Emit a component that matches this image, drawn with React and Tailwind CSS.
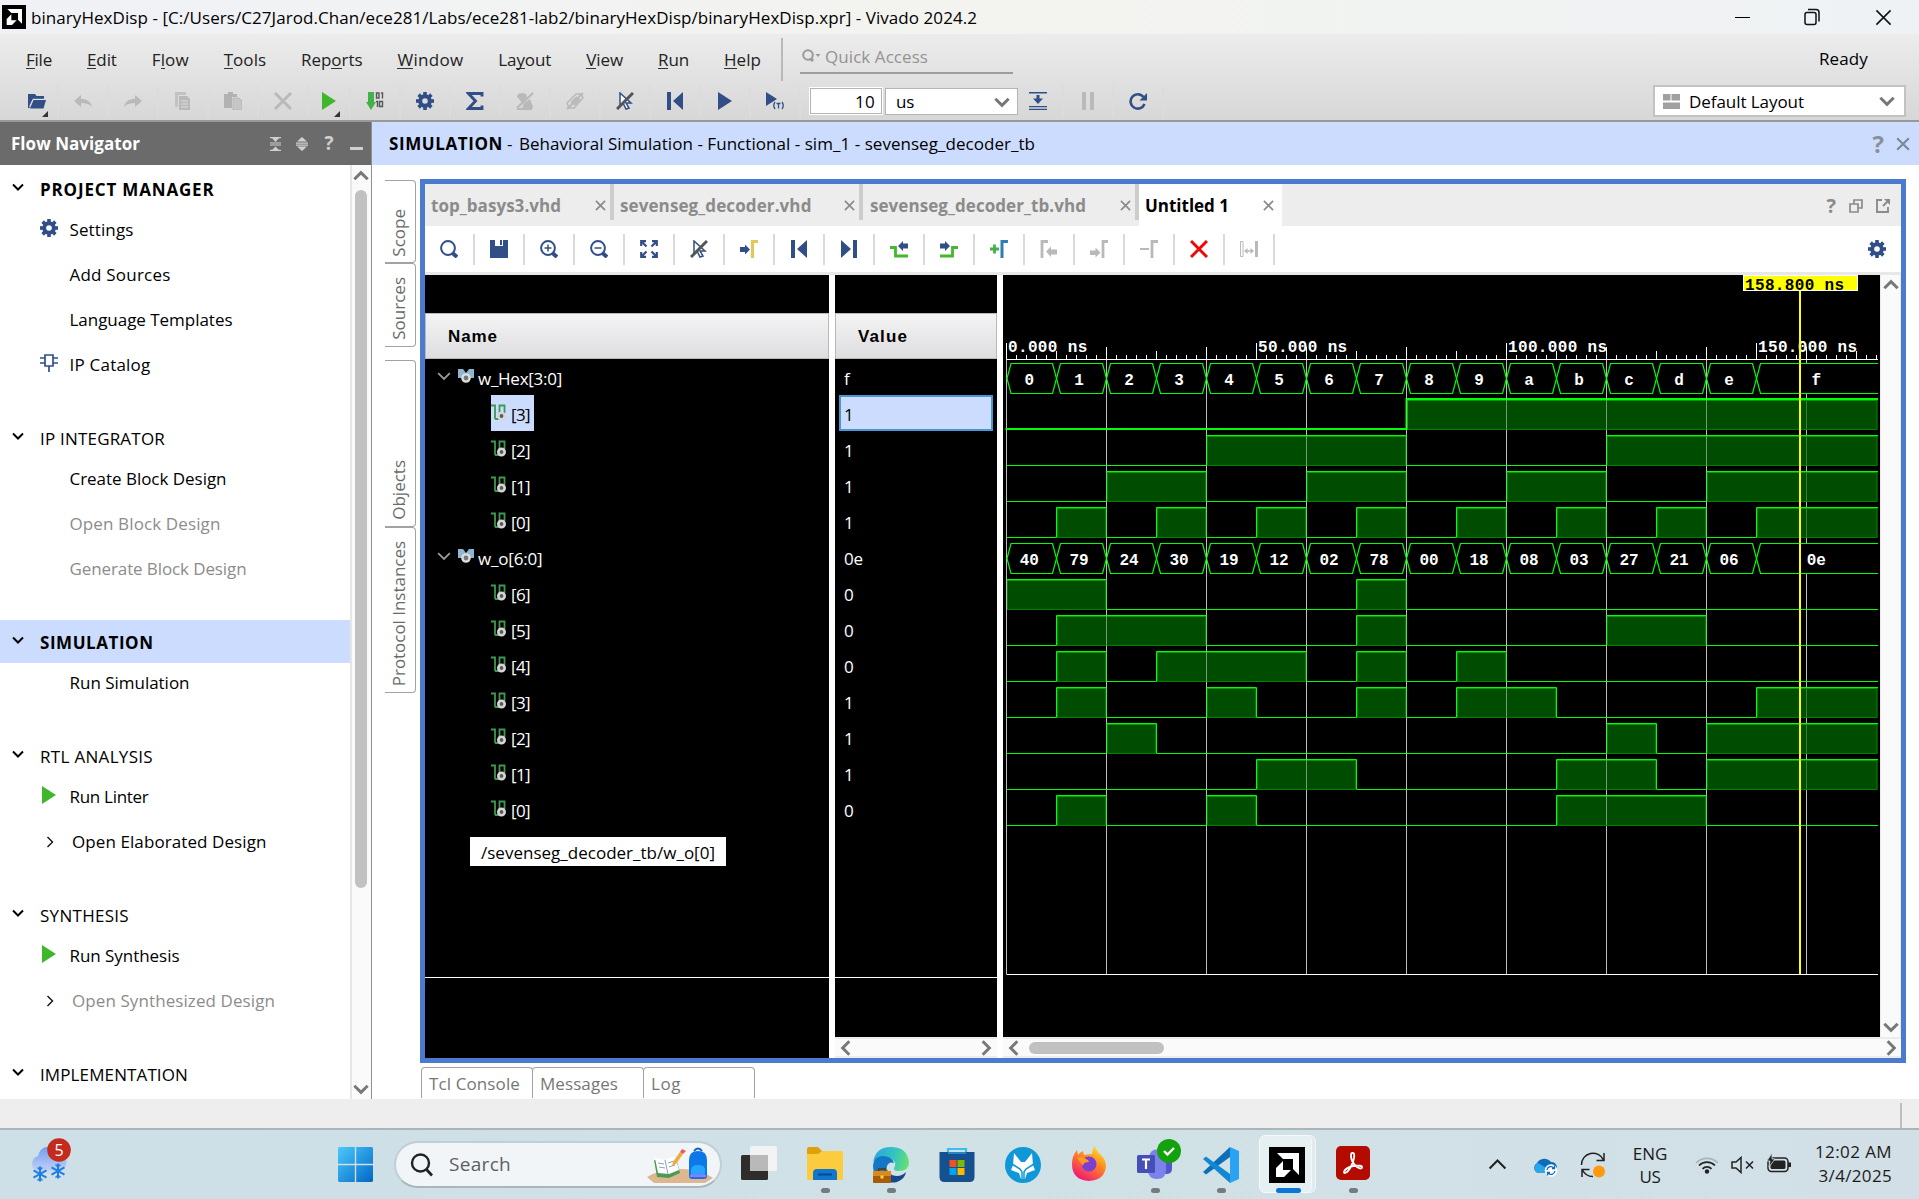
import React, { useLayoutEffect, useRef } from "react";

const NAVY = "#314f86";
const GRAY = "#b9b9b9";

/* Single-line label whose tracking is adjusted so that it fills a given width. */
function Label({ w, className = "", children }) {
  const ref = useRef(null);
  useLayoutEffect(() => {
    const el = ref.current;
    el.style.letterSpacing = "0px";
    const n = el.textContent.length;
    const natural = el.getBoundingClientRect().width;
    if (w && n) el.style.letterSpacing = `${(w - natural) / n}px`;
  }, [w]);
  return (
    <span ref={ref} className={"inline-block whitespace-pre " + className}>
      {children}
    </span>
  );
}

function Svg({ w = 18, h = 18, vb, className = "", children }) {
  return (
    <svg width={w} height={h} viewBox={vb || `0 0 ${w} ${h}`} className={"block shrink-0 " + className} fill="none">
      {children}
    </svg>
  );
}

/* ---------- small icons ---------- */
const Gear = ({ s = 18, c = NAVY }) => (
  <Svg w={s} h={s} vb="0 0 18 18">
    <circle cx="9" cy="9" r="4.8" stroke={c} strokeWidth="4" />
    {[0, 45, 90, 135, 180, 225, 270, 315].map((a) => (
      <rect key={a} x="7.2" y="0" width="3.6" height="4" fill={c} transform={`rotate(${a} 9 9)`} />
    ))}
  </Svg>
);
const OpenFolder = () => (
  <Svg>
    <path d="M0 16V2h7l1.500 2H16v3H5L1.500 16z" fill={NAVY} />
    <path d="M5.500 8H18l-2.500 8.500H2z" fill={NAVY} />
    <path d="M1.500 14.500l3.500-7.200h11" stroke="#dfe3ea" strokeWidth="1" />
  </Svg>
);
const Undo = () => (
  <Svg>
    <path d="M0 9l7-6v4c6 0 10 2.500 11 8-2.500-3-6-4-11-4v4z" fill={GRAY} />
  </Svg>
);
const Redo = () => (
  <Svg>
    <path d="M18 9l-7-6v4c-6 0-10 2.500-11 8 2.500-3 6-4 11-4v4z" fill={GRAY} />
  </Svg>
);
const Copy = () => (
  <Svg>
    <path d="M1 0h11v3H4v12H1z" fill="#c2c2c2" />
    <path d="M5 4h8l3 3v11H5z" fill={GRAY} />
    <path d="M7 9h7M7 12h7M7 15h7" stroke="#dedede" />
  </Svg>
);
const Paste = () => (
  <Svg>
    <path d="M0 2h4V0h5v2h4v3H8v11H0z" fill="#b2b2b2" />
    <path d="M9 6h6l3 3v9H9z" fill="#c6c6c6" stroke={GRAY} />
  </Svg>
);
const Cross = ({ c = GRAY, sw = 3 }) => (
  <Svg>
    <path d="M1 1l16 16M17 1L1 17" stroke={c} strokeWidth={sw} />
  </Svg>
);
const PlayGreen = () => (
  <Svg>
    <path d="M2 0l14 9L2 18z" fill="#3fb62c" />
  </Svg>
);
const Bits = () => (
  <Svg>
    <path d="M2 0h6v10h2l-5 8-5-8h2z" fill="#43b049" />
    <path d="M10.500 1h2.500v5h-2.500zM15 1h1.500v5.500M13.500 9.500h3v5h-3zM10 9.500h1.500V15" stroke="#555" strokeWidth="1.400" />
  </Svg>
);
const Sigma = () => (
  <Svg>
    <path d="M16 4.500V1.500H2.500L9.500 9l-7 7.500H16v-3" stroke={NAVY} strokeWidth="2.900" />
  </Svg>
);
const MutedPen = () => (
  <Svg>
    <path d="M2 2l4-1 4 1 1 3-5 6-3-4-2-2zM8 11l6-4 3 8-1 2H6z" fill={GRAY} />
    <path d="M1 16L17 1M1 17h15" stroke={GRAY} strokeWidth="2.200" />
  </Svg>
);
const MutedTag = () => (
  <Svg>
    <path d="M1 11L10 2h5l2 4-9 10H3z" stroke={GRAY} strokeWidth="1.500" />
    <path d="M5 11l6-6M8 13l6-6M1 17L17 1" stroke={GRAY} strokeWidth="2" />
  </Svg>
);
const CursorOff = () => (
  <Svg>
    <path d="M4 1v13l3-3 3 6 3-1-3-5h5z" fill="#fff" stroke={NAVY} strokeWidth="1.500" />
    <path d="M1 17L17 1" stroke="#555" strokeWidth="3" />
  </Svg>
);
const ToStart = () => (
  <Svg>
    <path d="M1 0h4v18H1zM17 0v18L7 9z" fill={NAVY} />
  </Svg>
);
const ToEnd = () => (
  <Svg>
    <path d="M13 0h4v18h-4zM1 0v18l10-9z" fill={NAVY} />
  </Svg>
);
const Play = () => (
  <Svg>
    <path d="M2 0l14 9L2 18z" fill={NAVY} />
  </Svg>
);
const PlayT = () => (
  <Svg>
    <path d="M0 0l11 7L0 14z" fill={NAVY} />
    <path d="M9 10q-2.500 3.500 0 7M16 10q2.500 3.500 0 7M10.500 11.500h4M12.500 11.500v5" stroke={NAVY} strokeWidth="1.300" />
  </Svg>
);
const StepDown = () => (
  <Svg>
    <path d="M0 0h18v1.500H0zM0 14h18v1.300H0zM0 16.700h18V18H0zM7.500 3h3v3.500H14L9 12 4 6.500h3.500z" fill={NAVY} />
  </Svg>
);
const Pause = () => (
  <Svg>
    <path d="M3 0h4v18H3zM11 0h4v18h-4z" fill={GRAY} />
  </Svg>
);
const Relaunch = () => (
  <Svg>
    <path d="M14.500 5A7.200 7.200 0 1 0 15.500 12" stroke={NAVY} strokeWidth="2.600" />
    <path d="M18 1v7.500h-7.500z" fill={NAVY} />
  </Svg>
);
const Lens = ({ sign }) => (
  <Svg>
    <circle cx="8" cy="8" r="6.900" stroke={NAVY} strokeWidth="2" />
    <path d="M12.500 13l4.500 4" stroke={NAVY} strokeWidth="4" />
    {sign && <path d="M4.500 8h7" stroke={NAVY} strokeWidth="1.500" />}
    {sign === "+" && <path d="M8 4.500v7" stroke={NAVY} strokeWidth="1.500" />}
  </Svg>
);
const Save = () => (
  <Svg>
    <path d="M0 0h5v6h8V0h5v18H0z" fill={NAVY} />
    <path d="M10 0h2v5h-2z" fill={NAVY} />
  </Svg>
);
const FitIcon = () => (
  <Svg>
    <path d="M1.200 6V1.200H6M12 1.200h4.800V6M16.800 12v4.800H12M6 16.800H1.200V12M1.500 1.500l5 5M16.500 1.500l-5 5M16.500 16.500l-5-5M1.500 16.500l5-5" stroke={NAVY} strokeWidth="2.200" />
  </Svg>
);
const GotoCursor = () => (
  <Svg>
    <path d="M0 7h5V4.500l5 5-5 5V12H0z" fill={NAVY} />
    <path d="M12.500 18V1.500H18" stroke="#e3c65c" strokeWidth="3.200" />
  </Svg>
);
const PrevEdge = () => (
  <Svg>
    <path d="M8 6l5-5v2.500h5v5h-5V11z" fill={NAVY} />
    <path d="M0 7.500h5.500v8.500H18" stroke="#43b82f" strokeWidth="2.800" />
  </Svg>
);
const NextEdge = () => (
  <Svg>
    <path d="M10 6L5 1v2.500H0v5h5V11z" fill={NAVY} />
    <path d="M18 7.500h-5.500v8.500H0" stroke="#43b82f" strokeWidth="2.800" />
  </Svg>
);
const AddMarker = () => (
  <Svg>
    <path d="M0 9h9M4.500 4.500v9" stroke="#43b049" strokeWidth="2.800" />
    <path d="M12 18V1.500h6" stroke="#2f7fb5" strokeWidth="3" />
  </Svg>
);
const PrevMarker = () => (
  <Svg>
    <path d="M2 18V1.500h6" stroke={GRAY} strokeWidth="2.800" />
    <path d="M6 11.500l5-5v3h6v5h-6v2.500z" fill={GRAY} />
  </Svg>
);
const NextMarker = () => (
  <Svg>
    <path d="M13 18V1.500h5" stroke={GRAY} strokeWidth="2.800" />
    <path d="M10.500 12.500l-5-5v3H0v4.500h5.500v2.500z" fill={GRAY} />
  </Svg>
);
const DelMarker = () => (
  <Svg>
    <path d="M0 9h9" stroke={GRAY} strokeWidth="2" />
    <path d="M12 18V1.500h6" stroke={GRAY} strokeWidth="2.800" />
  </Svg>
);
const Swap = () => (
  <Svg>
    <path d="M.5 1.500h2.500v15H.5z" stroke={GRAY} />
    <path d="M15 1h3v16h-3zM4 11l3.500-3v6zM14 11l-3.500-3v6z" fill={GRAY} />
    <path d="M5 11h8" stroke={GRAY} strokeWidth="1.500" />
  </Svg>
);
const Chev = ({ d = "down", s = 12, c = "#222", sw = 2 }) => (
  <Svg w={s} h={s} vb="0 0 12 12">
    <path
      d={{ down: "M1 3.500l5 5 5-5", up: "M1 8.500l5-5 5 5", left: "M8.500 1l-5 5 5 5", right: "M3.500 1l5 5-5 5" }[d]}
      stroke={c}
      strokeWidth={sw}
    />
  </Svg>
);
const SmallX = ({ s = 11, c = "#8a8a8a", sw = 1.800 }) => (
  <Svg w={s} h={s} vb="0 0 12 12">
    <path d="M1 1l10 10M11 1L1 11" stroke={c} strokeWidth={sw} />
  </Svg>
);
const Chip = () => (
  <Svg>
    <path d="M5 1h8v11H5zM9 12v6M0 4h5M0 9h5M13 4h5M13 9h5" stroke={NAVY} strokeWidth="1.700" />
  </Svg>
);
const BusIcon = () => (
  <Svg w={16} h={15}>
    <path d="M0 0h5l3 4 3-4h5v9h-4l-3 3H7L4 9H0z" fill="#8fb6cf" />
    <circle cx="8" cy="9" r="3.600" fill="#777" stroke="#dedede" strokeWidth="2.400" />
  </Svg>
);
const BitIcon = () => (
  <Svg w={16} h={17}>
    <path d="M0 1.500h4V15M4 15h4.500M8.500 12V1.500h5V9" stroke="#3c9a52" strokeWidth="1.800" />
    <circle cx="10.500" cy="12" r="3.200" fill="#5c5c5c" stroke="#d6d6d6" strokeWidth="2.600" />
  </Svg>
);
const AmdMark = ({ s }) => (
  <Svg w={s} h={s} vb="0 0 36 36">
    <rect width="36" height="36" fill="#000" />
    <path d="M8 6h22v22l-6-6V12H14z" fill="#fff" />
    <path d="M14 14v9h8l-7 7H7v-9z" fill="#fff" />
  </Svg>
);

/* ---------- header ---------- */
const U = ({ children }) => (
  <span className="inline-block border-b border-[#333] leading-[17px]">{children}</span>
);

function TitleBar() {
  return (
    <div className="flex h-[34px] shrink-0 items-center bg-gradient-to-r from-[#f0f1f6] via-[#f3f4ef] to-[#eff2f5] pl-[2px] text-[17px] text-black">
      <AmdMark s={24} />
      <Label w={946} className="ml-[5px] pt-[2px]">
        binaryHexDisp - [C:/Users/C27Jarod.Chan/ece281/Labs/ece281-lab2/binaryHexDisp/binaryHexDisp.xpr] - Vivado 2024.2
      </Label>
      <div className="ml-auto flex items-center pr-[27px]">
        <div className="h-px w-[15px] bg-black" />
        <Svg w={16} h={18} className="ml-[54px]">
          <rect x="1" y="4.500" width="11" height="12" rx="2" stroke="#111" strokeWidth="1.500" />
          <path d="M4 1.500h8q3 0 3 3v9" stroke="#111" strokeWidth="1.500" />
        </Svg>
        <div className="ml-[55px]">
          <SmallX s={17} c="#111" sw={1.1} />
        </div>
      </div>
    </div>
  );
}

function MenuRow() {
  return (
    <div className="flex h-[50px] items-center pl-[26px] text-[17px] text-[#222]">
      <div className="flex w-[733px] items-center gap-[34.9px] pt-[2px]">
        <Label w={26}><U>F</U>ile</Label>
        <Label w={30}><U>E</U>dit</Label>
        <Label w={37}>F<U>l</U>ow</Label>
        <Label w={42.500}><U>T</U>ools</Label>
        <Label w={61.500}>Rep<U>o</U>rts</Label>
        <Label w={66}><U>W</U>indow</Label>
        <Label w={53}>La<U>y</U>out</Label>
        <Label w={37}><U>V</U>iew</Label>
        <Label w={31}><U>R</U>un</Label>
        <Label w={37}><U>H</U>elp</Label>
      </div>
      <div className="ml-[22px] h-[43px] w-[2px] bg-[#b9b9b9]" />
      <div className="-mt-[4px] ml-[17px] flex h-[34px] w-[213px] items-center border-b-2 border-[#9d9d9d] text-[#939393]">
        <Svg w={19} h={15} className="ml-[2px]">
          <circle cx="6" cy="6" r="4.800" stroke="#999" strokeWidth="2" />
          <path d="M9 10l2 2" stroke="#999" strokeWidth="3" />
          <path d="M13.500 5h5L16 8z" fill="#999" />
        </Svg>
        <Label w={103} className="ml-[4px] pt-px">Quick Access</Label>
      </div>
      <div className="ml-auto pr-[51px] text-black">
        <Label w={49}>Ready</Label>
      </div>
    </div>
  );
}

const Corner = () => (
  <Svg w={6} h={6} className="absolute right-[9px] bottom-0">
    <path d="M6 0v6H0z" fill="#333" />
  </Svg>
);

function Cell({ w = "w-[50px]", corner, children }) {
  return (
    <div className={"relative flex h-[32px] shrink-0 items-center justify-center border-r-2 border-[#dcdcdc] " + w}>
      {children}
      {corner && <Corner />}
    </div>
  );
}

function MainToolbar() {
  return (
    <div className="flex h-[36px] items-center pb-[2px] pl-[17px] text-[17px] text-black">
      <Cell w="w-[42px]" corner><OpenFolder /></Cell>
      <Cell><Undo /></Cell>
      <Cell><Redo /></Cell>
      <Cell><Copy /></Cell>
      <Cell><Paste /></Cell>
      <Cell><Cross /></Cell>
      <Cell w="w-[42px]" corner><PlayGreen /></Cell>
      <Cell><Bits /></Cell>
      <Cell><Gear /></Cell>
      <Cell><Sigma /></Cell>
      <Cell><MutedPen /></Cell>
      <Cell><MutedTag /></Cell>
      <Cell><CursorOff /></Cell>
      <Cell><ToStart /></Cell>
      <Cell><Play /></Cell>
      <Cell><PlayT /></Cell>
      <div className="ml-[8px] flex h-[28px] w-[74px] items-center justify-end border-2 border-white bg-white pt-px pr-[6px] outline outline-[#b4b4b4] -outline-offset-2">
        <Label w={20}>10</Label>
      </div>
      <div className="ml-[2px] flex h-[27px] w-[133px] items-center justify-between border border-[#b4b4b4] bg-white pt-px pr-[7px] pl-[10px]">
        <Label w={18}>us</Label>
        <Chev s={16} c="#777" sw={2.200} />
      </div>
      <div className="-ml-[4px] flex">
        <Cell><StepDown /></Cell>
        <Cell><Pause /></Cell>
        <Cell><Relaunch /></Cell>
      </div>
      <div className="mr-[13px] ml-auto flex h-[32px] w-[253px] items-center border-2 border-[#c2c2c2] bg-white pr-[9px] pl-[8px]">
        <Svg w={17} h={15}>
          <path d="M0 0h7.500v6.500H0zM8.500 0H17v6.500H8.500zM0 8.500h17V15H0z" fill="#a0a0a0" />
        </Svg>
        <Label w={115} className="ml-[9px] pt-[2px]">Default Layout</Label>
        <div className="ml-auto"><Chev s={16} c="#777" sw={2.200} /></div>
      </div>
    </div>
  );
}

/* ---------- flow navigator ---------- */
const SECTIONS = [
  { t: "PROJECT MANAGER", w: 174.500, bold: true, items: [
    { t: "Settings", w: 64, icon: "gear" },
    { t: "Add Sources", w: 101 },
    { t: "Language Templates", w: 163 },
    { t: "IP Catalog", w: 81, icon: "chip" },
  ] },
  { t: "IP INTEGRATOR", w: 125, items: [
    { t: "Create Block Design", w: 157 },
    { t: "Open Block Design", w: 151, off: true },
    { t: "Generate Block Design", w: 177, off: true },
  ] },
  { t: "SIMULATION", w: 113.500, bold: true, active: true, items: [{ t: "Run Simulation", w: 120 }] },
  { t: "RTL ANALYSIS", w: 113, items: [
    { t: "Run Linter", w: 79, icon: "play" },
    { t: "Open Elaborated Design", w: 194.500, sub: true },
  ] },
  { t: "SYNTHESIS", w: 89, items: [
    { t: "Run Synthesis", w: 110, icon: "play" },
    { t: "Open Synthesized Design", w: 203, sub: true, off: true },
  ] },
  { t: "IMPLEMENTATION", w: 148, items: [] },
];

function FlowNavigator() {
  return (
    <div className="flex w-[372px] shrink-0 flex-col border-r border-[#8f8f8f]">
      <div className="flex h-[43px] shrink-0 items-center bg-[#6b6b6b] pr-[8px] pl-[11px] text-[17px] font-bold text-white">
        <Label w={129}>Flow Navigator</Label>
        <div className="ml-auto flex items-center gap-[15px]">
          <Svg w={11} h={14}>
            <path d="M0 0h11v1.200H0zM2 1h7L5.500 5zM0 5.500h11v1H0zM0 7.500h11v1H0zM5.500 9.500L9 13H2zM0 12.800h11V14H0z" fill="#d0d0d0" />
          </Svg>
          <Svg w={12} h={14}>
            <path d="M6 0l5 4.500H1zM0 5.500h12v1.200H0zM0 7.500h12v1.200H0zM1 9.500h10L6 14z" fill="#d0d0d0" />
          </Svg>
          <span className="w-[12px] text-center text-[19px] text-[#d0d0d0]">?</span>
          <div className="mt-[10px] h-[3px] w-[13px] bg-[#d0d0d0]" />
        </div>
      </div>
      <div className="flex h-[934px] shrink-0 overflow-hidden bg-white">
        <div className="flex w-[350px] flex-col gap-[33px] overflow-hidden pt-[6px] text-[17px] text-black">
          {SECTIONS.map((s) => (
            <div key={s.t} className="flex flex-col">
              <div className={"-mt-[4px] -mb-[3px] flex h-[43px] items-center pl-[12px] " + (s.active ? "bg-[#cbdcfe]" : "")}>
                <div className="-mt-[3px]"><Chev c="#000" /></div>
                <Label w={s.w} className={"ml-[16px] pt-[3px] " + (s.bold ? "font-bold" : "")}>{s.t}</Label>
              </div>
              {s.items.map((i) => (
                <div key={i.t} className={"flex h-[45px] items-center pl-[40px] " + (i.off ? "text-[#8c8c8c]" : "")}>
                  <div className={"flex shrink-0 " + (i.sub ? "w-[32px] pl-[4px]" : "w-[29.500px] -mt-[4px]")}>
                    {i.icon === "gear" && <Gear />}
                    {i.icon === "chip" && <Chip />}
                    {i.icon === "play" && <PlayGreen />}
                    {i.sub && <Chev d="right" c="#111" sw={1.400} />}
                  </div>
                  <Label w={i.w}>{i.t}</Label>
                </div>
              ))}
            </div>
          ))}
        </div>
        <div className="flex w-[21px] flex-col items-center border-l-2 border-[#e6e6e6] bg-[#fafafa] pt-[3px] pr-[2px] pb-[2px]">
          <Chev d="up" s={16} c="#777" sw={2.200} />
          <div className="mt-[6px] h-[698px] w-[12px] rounded-full bg-[#c1c1c1]" />
          <div className="mt-auto"><Chev s={16} c="#777" sw={2.200} /></div>
        </div>
      </div>
    </div>
  );
}

/* ---------- wave viewer ---------- */
const HEX = ["0", "1", "2", "3", "4", "5", "6", "7", "8", "9", "a", "b", "c", "d", "e", "f"];
const SEG = ["40", "79", "24", "30", "19", "12", "02", "78", "00", "18", "08", "03", "27", "21", "06", "0e"];
const bits = (values, n) =>
  Array.from({ length: n }, (_, k) => values.map((v) => (parseInt(v, 16) >> (n - 1 - k)) & 1));
const ROWS = [
  { name: "w_Hex[3:0]", w: 84, value: "f", bus: HEX },
  ...bits(HEX, 4).map((b, k) => ({ name: `[${3 - k}]`, bit: b, value: "1", selected: k === 0 })),
  { name: "w_o[6:0]", w: 64.500, value: "0e", bus: SEG },
  ...bits(SEG, 7).map((b, k) => ({ name: `[${6 - k}]`, bit: b, value: String(b[15]) })),
];

const X0 = 3.500;
const XEND = 875;
const xAt = (i) => (i >= 16 ? XEND : X0 + i * 50);

function BusTrace({ values, y }) {
  return values.map((v, i) => {
    const a = xAt(i) + (i ? 0 : 0.500);
    const b = xAt(i + 1);
    const last = i === 15;
    return (
      <g key={i}>
        <path
          d={last
            ? `M${b} ${y} H${a + 4} L${a} ${y + 15} L${a + 4} ${y + 30} H${b}`
            : `M${a} ${y + 15} L${a + 4} ${y} H${b - 4} L${b} ${y + 15} L${b - 4} ${y + 30} H${a + 4} Z`}
          fill="#000"
          stroke="#00ff00"
          strokeWidth="1.200"
        />
        <text x={(a + b) / 2 - (last ? 1 : 2.500)} y={y + 21} textAnchor="middle" fill="#fff" className="font-['Liberation_Mono',monospace] text-[16px] font-bold">
          {v}
        </text>
      </g>
    );
  });
}

function BitTrace({ bit, y, selected }) {
  const sw = selected ? 2 : 1;
  const top = selected ? y - 0.500 : y;
  const low = selected ? y + 29.500 : y + 30;
  let d = `M${X0 - (selected ? 1 : 0)} ${bit[0] ? top : low}`;
  const fills = [];
  let start = bit[0] ? 0 : -1;
  for (let i = 1; i <= 16; i++) {
    if (i === 16 || bit[i] !== bit[i - 1]) {
      if (start >= 0) {
        fills.push([xAt(start), xAt(i)]);
        start = -1;
      }
      if (i < 16) {
        d += ` H${xAt(i)} V${bit[i] ? top : low}`;
        if (bit[i]) start = i;
      }
    }
  }
  d += ` H${XEND}`;
  return (
    <g>
      {fills.map(([a, b]) => (
        <g key={a}>
          <rect x={a + 0.500} y={y + 0.500} width={b - a - 1} height={30} fill="#006a00" fillOpacity="0.720" />
          <path d={`M${a + 1} ${y + 1} V${y + 30} H${b - 1} V${y + 1}`} stroke="#008000" />
          <path d={`M${a + 0.500} ${y + 1} H${b - 0.500}`} stroke="#009c00" />
        </g>
      ))}
      <path d={d} stroke="#00ff00" strokeWidth={sw} fill="none" />
    </g>
  );
}

function WaveCanvas() {
  const ticks = Array.from({ length: 88 }, (_, i) => i * 2);
  const grid = Array.from({ length: 9 }, (_, i) => i * 20);
  return (
    <svg width="877" height="762" className="block bg-black" fill="none">
      {grid.map((t) => (
        <path key={t} d={`M${X0 + t * 5} 84 V699`} stroke="#bdbdbd" />
      ))}
      {ticks.map((t) => (
        <path key={t} d={`M${X0 + t * 5} ${t % 20 === 0 ? 72 : t % 10 === 0 ? 76 : 80} V84`} stroke="#fff" />
      ))}
      {[0, 50, 100, 150].map((t) => (
        <g key={t}>
          <path d={`M${X0 + t * 5} 68 V84`} stroke="#fff" />
          <text x={X0 + t * 5 + 1.500} y="77" fill="#fff" className="font-['Liberation_Mono',monospace] text-[16px] font-bold tracking-[0.35px] whitespace-pre">
            {t}.000 ns
          </text>
        </g>
      ))}
      <path d={`M${X0} 84.500 H${XEND}`} stroke="#fff" />
      {ROWS.map((r, i) =>
        r.bus ? (
          <BusTrace key={i} values={r.bus} y={88.500 + 36 * i} />
        ) : (
          <BitTrace key={i} bit={r.bit} y={88.500 + 36 * i} selected={r.selected} />
        )
      )}
      {grid.slice(1, 8).map((t) => (
        <path key={t} d={`M${X0 + t * 5} 84 V550`} stroke="#bdbdbd" strokeOpacity="0.450" />
      ))}
      <path d={`M${X0} 699.500 H${XEND}`} stroke="#fff" />
      <rect x="796" y="15" width="2" height="684" fill="#ffff00" />
      <rect x="740.500" y="0.500" width="114" height="15" fill="#ffff00" stroke="#fff" />
      <text x="742" y="14.500" fill="#000" className="font-['Liberation_Mono',monospace] text-[16px] font-bold tracking-[0.35px] whitespace-pre">
        158.800 ns
      </text>
    </svg>
  );
}

function ColumnHeader({ children, w }) {
  return (
    <div className="mt-[38px] flex h-[46px] shrink-0 items-center border border-[#b8b8b8] bg-gradient-to-b from-[#f4f4f5] to-[#dedee0] pt-[2px] pl-[22px] font-['Liberation_Sans',Arial,sans-serif] text-[17px] font-bold text-black">
      <Label w={w}>{children}</Label>
    </div>
  );
}

function NameColumn() {
  return (
    <div className="relative flex w-[404px] shrink-0 flex-col bg-black text-[17px] text-white">
      <ColumnHeader w={50}>Name</ColumnHeader>
      {ROWS.map((r, i) =>
        r.bus ? (
          <div key={i} className="flex h-[36px] shrink-0 items-center pt-[4px] pl-[12px]">
            <div className="-mt-[6px]"><Chev s={14} c="#999" sw={1.600} /></div>
            <div className="-mt-[6px] ml-[7px]"><BusIcon /></div>
            <Label w={r.w} className="ml-[4px]">{r.name}</Label>
          </div>
        ) : (
          <div key={i} className="flex h-[36px] shrink-0 pl-[66px]">
            <div className={"flex w-[43px] items-center pt-[3px] " + (r.selected ? "bg-[#cbdcfe] text-black" : "")}>
              <div className="-mt-[5px]"><BitIcon /></div>
              <Label w={19} className="ml-[4px]">{r.name}</Label>
            </div>
          </div>
        )
      )}
      <div className="mt-[150px] h-px shrink-0 bg-white" />
      <div className="absolute top-[562px] left-[45px] flex h-[29px] w-[256px] items-center bg-white pt-[3px] pl-[11px] text-black">
        <Label w={234}>/sevenseg_decoder_tb/w_o[0]</Label>
      </div>
    </div>
  );
}

function ValueColumn() {
  return (
    <div className="flex w-[162px] shrink-0 flex-col bg-black text-[17px] text-white">
      <ColumnHeader w={50}>Value</ColumnHeader>
      {ROWS.map((r, i) => (
        <div
          key={i}
          className={
            "mx-[4px] flex h-[36px] shrink-0 items-center pt-[3px] " +
            (r.selected ? "border-2 border-[#4a96d3] bg-[#cbdcfe] pl-[3px] text-black" : "pl-[5px]")
          }
        >
          <Label w={r.value.length > 1 ? 19 : undefined}>{r.value}</Label>
        </div>
      ))}
      <div className="mt-[150px] h-px shrink-0 bg-white" />
      <div className="mt-auto flex h-[21px] items-center justify-between border-y-2 border-[#ececec] bg-[#fafafa] px-[3px]">
        <Chev d="left" s={16} c="#777" sw={2.200} />
        <Chev d="right" s={16} c="#777" sw={2.200} />
      </div>
    </div>
  );
}

function WaveColumn() {
  return (
    <div className="flex w-[898px] shrink-0 flex-col">
      <div className="flex h-[762px]">
        <WaveCanvas />
        <div className="flex w-[21px] flex-col items-center justify-between border-x border-[#ececec] bg-[#fafafa] py-[2px]">
          <Chev d="up" s={16} c="#777" sw={2.200} />
          <Chev s={16} c="#777" sw={2.200} />
        </div>
      </div>
      <div className="flex h-[21px] items-center border-y-2 border-[#ececec] bg-[#fafafa] pr-[2px] pl-[3px]">
        <Chev d="left" s={16} c="#777" sw={2.200} />
        <div className="ml-[7px] h-[12px] w-[135px] rounded-full bg-[#c1c1c1]" />
        <div className="ml-auto"><Chev d="right" s={16} c="#777" sw={2.200} /></div>
      </div>
    </div>
  );
}

function Tab({ children, w, box, last, pad = "pl-[6px]" }) {
  return (
    <div className={"flex shrink-0 " + box + (last ? " bg-white text-black" : " text-[#8b8b8b]")}>
      <div className={"flex flex-1 items-center justify-between " + pad + (last ? " pr-[8px]" : " pr-[4px]")}>
        <Label w={w} className="pt-[1px] font-bold">{children}</Label>
        <SmallX />
      </div>
      {!last && <div className="h-[36px] w-[4px] bg-[#cccccc]" />}
    </div>
  );
}

function ToolCell({ children }) {
  return (
    <div className="flex h-[31px] w-[50px] shrink-0 items-center justify-center border-r-2 border-[#dadada]">
      {children}
    </div>
  );
}

function WaveWindow() {
  return (
    <div className="flex h-[884px] w-[1486px] shrink-0 flex-col border-[5px] border-[#4a7bce] bg-white">
      <div className="flex h-[42px] shrink-0 bg-[#ededed] text-[17px]">
        <Tab box="w-[189px]" w={130}>top_basys3.vhd</Tab>
        <Tab box="w-[249px]" w={191.500}>sevenseg_decoder.vhd</Tab>
        <Tab box="w-[276px]" w={216} pad="pl-[7px]">sevenseg_decoder_tb.vhd</Tab>
        <Tab box="w-[143px]" w={84} last>Untitled 1</Tab>
        <div className="ml-auto flex items-center gap-[13px] pt-[2px] pr-[11px] text-[#8b8b8b]">
          <span className="text-[20px] leading-none font-bold">?</span>
          <Svg w={14} h={14}>
            <path d="M1 5h8v8H1zM5 5V1h8v8H9" stroke="#8b8b8b" strokeWidth="1.700" />
          </Svg>
          <Svg w={14} h={14}>
            <path d="M6 1H1v12h11V8M7 7l5-5" stroke="#8b8b8b" strokeWidth="1.900" />
            <path d="M8 0h6v6z" fill="#8b8b8b" />
          </Svg>
        </div>
      </div>
      <div className="flex h-[49px] shrink-0 items-center border-b-[3px] border-[#e8e8e8]">
        <ToolCell><Lens /></ToolCell>
        <ToolCell><Save /></ToolCell>
        <ToolCell><Lens sign="+" /></ToolCell>
        <ToolCell><Lens sign="-" /></ToolCell>
        <ToolCell><FitIcon /></ToolCell>
        <ToolCell><CursorOff /></ToolCell>
        <ToolCell><GotoCursor /></ToolCell>
        <ToolCell><ToStart /></ToolCell>
        <ToolCell><ToEnd /></ToolCell>
        <ToolCell><PrevEdge /></ToolCell>
        <ToolCell><NextEdge /></ToolCell>
        <ToolCell><AddMarker /></ToolCell>
        <ToolCell><PrevMarker /></ToolCell>
        <ToolCell><NextMarker /></ToolCell>
        <ToolCell><DelMarker /></ToolCell>
        <ToolCell><Cross c="#ee0808" sw={3} /></ToolCell>
        <ToolCell><Swap /></ToolCell>
        <div className="mr-[15px] ml-auto"><Gear /></div>
      </div>
      <div className="flex flex-1 gap-[6px]">
        <NameColumn />
        <ValueColumn />
        <WaveColumn />
      </div>
    </div>
  );
}

function SideTab({ box, children }) {
  return (
    <div className={"flex w-[31px] justify-center rounded-r-[4px] border border-l-0 border-[#a2a2a2] pr-[2px] text-[17px] text-[#6a6a6a] " + box}>
      <span className="rotate-180 whitespace-nowrap [writing-mode:vertical-rl]">{children}</span>
    </div>
  );
}

function SimulationPane() {
  return (
    <div className="flex flex-1 flex-col bg-white">
      <div className="flex h-[43px] shrink-0 items-center bg-[#cbdcfe] pr-[9px] pl-[17px] text-[17px] text-black">
        <Label w={114} className="font-bold">SIMULATION</Label>
        <Label w={12} className="ml-[4px]">- </Label>
        <Label w={516}>Behavioral Simulation - Functional - sim_1 - sevenseg_decoder_tb</Label>
        <div className="ml-auto flex items-center gap-[12px]">
          <span className="text-[24px] leading-none font-bold text-[#8a8f9a]">?</span>
          <SmallX s={14} c="#7d8798" />
        </div>
      </div>
      <div className="flex pt-[14px] pl-[13px]">
        <div className="flex w-[35px] flex-col">
          <SideTab box="mt-px h-[83px] items-end pb-[5px]">Scope</SideTab>
          <SideTab box="h-[84px] items-end pb-[6px]">Sources</SideTab>
          <SideTab box="mt-[13px] h-[167px] items-end pb-[6px]">Objects</SideTab>
          <SideTab box="h-[166px] items-end pb-[6px] tracking-[-0.03px]">Protocol Instances</SideTab>
        </div>
        <WaveWindow />
      </div>
      <div className="mt-[4px] flex pl-[49px] text-[17px] text-[#777]">
        <div className="flex h-[31px] w-[112px] items-center rounded-t-[4px] border border-b-0 border-[#a2a2a2] pt-[2px] pl-[7px]">
          <Label w={91}>Tcl Console</Label>
        </div>
        <div className="-ml-px flex h-[31px] w-[112px] items-center rounded-t-[4px] border border-b-0 border-[#a2a2a2] pt-[2px] pl-[7px]">
          <Label w={78}>Messages</Label>
        </div>
        <div className="-ml-px flex h-[31px] w-[112px] items-center rounded-t-[4px] border border-b-0 border-[#a2a2a2] pt-[2px] pl-[7px]">
          <Label w={30}>Log</Label>
        </div>
      </div>
    </div>
  );
}

/* ---------- taskbar ---------- */
const Flake = ({ x, y }) => (
  <g transform={`translate(${x} ${y})`} stroke="#1f7fe0" strokeWidth="2">
    <path d="M0-7.500V7.500M-6.500-3.700L6.500 3.700M-6.500 3.700L6.500-3.700" />
    <path d="M-2.500-6.500L0-4l2.500-2.500M-2.500 6.500L0 4l2.500 2.500" strokeWidth="1.300" />
  </g>
);

function Weather() {
  return (
    <Svg w={44} h={46}>
      <defs>
        <linearGradient id="cloud" x1="0" y1="0" x2="0" y2="1">
          <stop offset="0" stopColor="#6d9ff0" />
          <stop offset="1" stopColor="#c3d0f5" />
        </linearGradient>
      </defs>
      <path d="M8 33a8 8 0 0 1 1-15 11.500 11.500 0 0 1 21-4 10 10 0 0 1 1 19z" fill="url(#cloud)" />
      <Flake x={11} y={36} />
      <Flake x={29} y={33} />
      <circle cx="30" cy="12" r="11.800" fill="#c42b1c" />
      <text x="30" y="17.500" textAnchor="middle" fill="#fff" className="text-[16px]">5</text>
    </Svg>
  );
}

const StartLogo = () => (
  <Svg w={35} h={35}>
    <defs>
      <linearGradient id="win" x1="0" y1="0" x2="1" y2="1">
        <stop offset="0" stopColor="#4cc9fb" />
        <stop offset="1" stopColor="#0067c6" />
      </linearGradient>
    </defs>
    <path d="M1 0h15.800v16.800H0V1zM18.200 0H34l1 1v15.800H18.200zM0 18.200h16.800V35H1l-1-1zM18.200 18.200H35V34l-1 1H18.200z" fill="url(#win)" />
  </Svg>
);

const SearchArt = () => (
  <Svg w={68} h={38}>
    <path d="M1 31q14-8 34-8t32 9l-8 5H8z" fill="#dfb78e" />
    <path d="M8 14l11 2 11-4 4 15-11 5-12-1z" fill="#4a9b55" />
    <path d="M9 12l10 2 10-4 4 14-10 4-11-1z" fill="#fff" />
    <path d="M19 14l3 14M12 17l6 1M13 21l6 1M22 17l6-2M23 21l6-2" stroke="#8fa3ad" />
    <path d="M27 16l7-10 3 2-7 10-4 2z" fill="#f5a83c" />
    <path d="M34 6l2-3 4 2-3 3z" fill="#ea5a50" />
    <path d="M48 5q4-5 8 0" stroke="#0b62c4" strokeWidth="2" />
    <path d="M43 14q0-9 9-9t9 9v16q0 3-3 3H46q-3 0-3-3z" fill="#0c78e8" />
    <path d="M45 24q0-5 7-5t7 5v6H45z" fill="#27a4ff" />
    <path d="M44 30h16" stroke="#b06cff" strokeWidth="2" />
  </Svg>
);

const TaskView = () => (
  <Svg w={36} h={36}>
    <rect x="0" y="10" width="27" height="25" rx="1.500" fill="#2e2d2b" />
    <rect x="9" y="1" width="27" height="25" rx="1.500" fill="#f3f3f3" />
    <rect x="9" y="10" width="18" height="16" fill="#b9b9b9" />
  </Svg>
);
const Explorer = () => (
  <Svg w={36} h={36}>
    <path d="M0 3q0-2 2-2h9l4 4v5H0z" fill="#e0a106" />
    <path d="M0 8h11l4-3h19q2 0 2 2v26q0 1-1 1H1q-1 0-1-1z" fill="#fccb3e" />
    <path d="M6 34v-7q0-4 4-4h16q4 0 4 4v7z" fill="#0f78ce" />
    <path d="M11 28.500h14" stroke="#06498c" strokeWidth="2" />
  </Svg>
);
const Edge = () => (
  <Svg w={36} h={36}>
    <defs>
      <linearGradient id="edge" x1="0" y1="0.300" x2="1" y2="0.500">
        <stop offset="0" stopColor="#2aa7e0" />
        <stop offset="0.600" stopColor="#35c6bd" />
        <stop offset="1" stopColor="#66e070" />
      </linearGradient>
    </defs>
    <path d="M0 16Q2 0 18 0t18 15q0 9-10 9-6 0-5-3 3-5-1-8-6-5-14-2-5 2-6 5z" fill="url(#edge)" />
    <path d="M0 18q1-8 9-9 10 0 12 7-5-2-7 3-2 6 4 10 3 3 2 6Q0 36 0 18z" fill="#1377c4" />
    <path d="M14 22q2 7 10 7 5 0 9-4-1 7-9 10-4 1-8 0z" fill="#144a8c" />
    <rect x="0" y="24" width="18" height="12" rx="1" fill="#a85c08" />
    <rect x="0" y="24" width="18" height="5" fill="#d98a1a" />
    <path d="M5.500 24v-2h7v2" stroke="#5c3609" strokeWidth="1.400" />
    <rect x="7.500" y="28.500" width="3" height="3" fill="#ffd34d" />
  </Svg>
);
const Store = () => (
  <Svg w={36} h={36}>
    <path d="M9 6V2h18v5" stroke="#38bdf4" strokeWidth="2.200" />
    <path d="M.5 5h35v25q0 5-5 5h-25q-5 0-5-5z" fill="#15508f" />
    <path d="M9 6h18" stroke="#38bdf4" strokeWidth="1" />
    <path d="M10.500 13h7v7h-7z" fill="#f25022" />
    <path d="M18.500 13h7v7h-7z" fill="#7fba00" />
    <path d="M10.500 21h7v7h-7z" fill="#00a4ef" />
    <path d="M18.500 21h7v7h-7z" fill="#ffb900" />
  </Svg>
);
const Wolf = () => (
  <Svg w={36} h={36}>
    <circle cx="18" cy="18" r="18" fill="#0f97d7" />
    <path d="M9 6l7 9h4l7-9 1 12 2 5-8 3-2 6h-4l-2-6-8-3 2-5z" fill="#fff" />
    <path d="M7 17l8 5 2 3v7M29 17l-8 5-2 3v7" stroke="#0f97d7" strokeWidth="1.500" />
  </Svg>
);
const Firefox = () => (
  <Svg w={36} h={36}>
    <defs>
      <linearGradient id="fox" x1="0.900" y1="0" x2="0.300" y2="1">
        <stop offset="0" stopColor="#fff03a" />
        <stop offset="0.450" stopColor="#ff8a1e" />
        <stop offset="1" stopColor="#f0157a" />
      </linearGradient>
    </defs>
    <path d="M18 35Q1 34 1 18q0-8 5-14l1 5q2-3 5-4l1 4q5-1 8-1 0-5 3-8 2 6 6 9 5 5 5 11Q34 34 18 35z" fill="url(#fox)" />
    <circle cx="18" cy="18" r="7.500" fill="#7b3fd4" />
    <path d="M6 12q6-2 9 1 3 1 3 3-6 0-6 4-3-4-6-8z" fill="#ff9a1f" />
  </Svg>
);
const Teams = () => (
  <Svg w={46} h={44}>
    <circle cx="20" cy="17" r="6.500" fill="#7b83eb" />
    <path d="M24 17h12v13q0 5-6 5h-6z" fill="#5059c9" />
    <path d="M12 17h18v14q0 9-9 9t-9-9z" fill="#7b83eb" />
    <rect x="1" y="16" width="18" height="18" rx="1.500" fill="#464eb8" />
    <path d="M6 20.500h8M10 20.500v9.500" stroke="#fff" strokeWidth="2.200" />
    <circle cx="33" cy="12" r="12" fill="#13a10e" />
    <path d="M28 12l3.500 3.500L38 9" stroke="#fff" strokeWidth="2.400" />
  </Svg>
);
const VsCode = () => (
  <Svg w={36} h={36}>
    <path d="M0 25l3 2.500L27 10V0z" fill="#0d6fb8" />
    <path d="M0 12l3-2.500L27 27v9z" fill="#1287d2" />
    <path d="M27 0l9 4v28l-9 4z" fill="#29a3f2" />
  </Svg>
);
const Acrobat = () => (
  <Svg w={34} h={34}>
    <rect width="34" height="34" rx="5" fill="#b30b00" />
    <path d="M16 7q3-1 2 5-2 9-7 14-3 2-3 0 1-4 9-6 9-1 9 1 0 3-5 0-6-5-6-11 0-3 1-3z" stroke="#fff" strokeWidth="1.900" />
  </Svg>
);

function TaskButton({ children, dot, lift }) {
  return (
    <div className="relative flex w-[66px] shrink-0 items-center justify-center">
      <div className={lift || ""}>{children}</div>
      {dot && <div className="absolute bottom-[6px] left-[28.5px] h-[5px] w-[9px] rounded-full bg-[#767b80]" />}
    </div>
  );
}

function Taskbar() {
  return (
    <div className="flex h-[71px] shrink-0 border-t-2 border-[#aab4b9] bg-gradient-to-r from-[#cddfe7] via-[#d0e2e6] to-[#d2dfe7] text-[#1b1b1b]">
      <div className="w-[338px] shrink-0 pt-[8px] pl-[29px]"><Weather /></div>
      <div className="flex w-[56px] shrink-0 items-center pb-px"><StartLogo /></div>
      <div className="mt-[11px] flex h-[47px] w-[328px] shrink-0 items-center rounded-full border-2 border-[#c0ced6] border-b-[#aab6bd] bg-[#f1f5f8] pr-[6px] pl-[14px]">
        <Svg w={24} h={24}>
          <circle cx="10.500" cy="10" r="8.500" stroke="#222" strokeWidth="2.400" />
          <path d="M16.500 16.500l5.500 6" stroke="#222" strokeWidth="2.800" />
        </Svg>
        <Label w={62} className="ml-[15px] text-[19px] text-[#5c5f62]">Search</Label>
        <div className="ml-auto"><SearchArt /></div>
      </div>
      <div className="ml-[4px] flex">
        <TaskButton lift="-mt-[3px]"><TaskView /></TaskButton>
        <TaskButton dot lift="-mt-[2px]"><Explorer /></TaskButton>
        <TaskButton dot><Edge /></TaskButton>
        <TaskButton><Store /></TaskButton>
        <TaskButton><Wolf /></TaskButton>
        <TaskButton lift="-mt-[1px]"><Firefox /></TaskButton>
        <TaskButton dot lift="-mt-[8px] ml-[8px]"><Teams /></TaskButton>
        <TaskButton dot><VsCode /></TaskButton>
        <div className="relative flex w-[66px] items-center justify-center">
          <div className="absolute top-[5px] left-[12px] h-[58px] w-[50px] rounded-[6px] border border-[#f0f6f8] bg-[#dfebef]" />
          <div className="absolute top-[5px] left-[5px] h-[58px] w-[53px] rounded-[6px] border border-[#f5f9fa] bg-[#e6eff2]" />
          <div className="relative"><AmdMark s={36} /></div>
          <div className="absolute bottom-[6px] left-[22px] h-[5px] w-[25px] rounded-full bg-[#0a76d6]" />
        </div>
        <TaskButton dot lift="-mt-[3px]"><Acrobat /></TaskButton>
      </div>
      <div className="mr-[27px] ml-auto flex items-center">
        <div className="flex w-[48px] justify-center"><Chev d="up" s={19} c="#222" sw={1.300} /></div>
        <div className="-mt-px flex w-[48px] justify-center pt-[4px]">
          <Svg w={25} h={21}>
            <path d="M5 17a5.500 5.500 0 0 1-1-10 8.500 8.500 0 0 1 14-1 5.500 5.500 0 0 1 1 11z" fill="#0f6cbd" />
            <path d="M5 17a5.500 5.500 0 0 1 0-10l10 6 2 4z" fill="#28a8ea" />
            <circle cx="18" cy="14.500" r="6.300" fill="#fff" />
            <path d="M14 14a4 4 0 0 1 7-2M22 15a4 4 0 0 1-7 2M21.500 9.500v3H19M14.500 19.500v-3H17" stroke="#0f6cbd" strokeWidth="1.300" />
          </Svg>
        </div>
        <div className="flex w-[48px] justify-center">
          <Svg w={26} h={26}>
            <path d="M1.500 13A11.500 11.500 0 0 1 23.500 8M24 1v7.500h-7.500M13 24.500A11.500 11.500 0 0 1 2.500 18M2 25v-7.500h7.500" stroke="#222" strokeWidth="1.500" />
            <circle cx="19" cy="19.500" r="6" fill="#ff9a0e" />
          </Svg>
        </div>
        <div className="flex w-[66px] flex-col items-center text-[17px] leading-[23px]">
          <Label w={34.500}>ENG</Label>
          <Label w={21}>US</Label>
        </div>
        <div className="ml-[6px] flex w-[36px] justify-center">
          <Svg w={24} h={18}>
            <path d="M1 7a15.500 15.500 0 0 1 22 0" stroke="#a8b4b9" strokeWidth="1.600" />
            <path d="M4 9.500a11.300 11.300 0 0 1 16 0M7.500 12.800a6.400 6.400 0 0 1 9 0" stroke="#222" strokeWidth="1.700" />
            <circle cx="12" cy="15.500" r="2.200" fill="#222" />
          </Svg>
        </div>
        <div className="flex w-[36px] justify-center">
          <Svg w={24} h={18}>
            <path d="M1 6h4l5-4.500v15L5 12H1zM15 5.500l7 7M22 5.500l-7 7" stroke="#222" strokeWidth="1.500" />
          </Svg>
        </div>
        <div className="-mt-[4px] flex w-[36px] justify-center">
          <Svg w={24} h={20}>
            <rect x="1" y="5" width="20" height="13.500" rx="3.500" stroke="#222" strokeWidth="1.500" />
            <rect x="3.500" y="7.500" width="15" height="8.500" rx="1.500" fill="#222" />
            <path d="M21 9.500h3v4.500h-3z" fill="#222" />
            <path d="M5 0L0 8h3l-1 6 6-8H5z" fill="#222" stroke="#d0e0e6" strokeWidth="0.800" />
          </Svg>
        </div>
        <div className="ml-[18px] flex w-[77px] flex-col items-end pb-[2px] text-[17px] leading-[24px]">
          <Label w={77}>12:02 AM</Label>
          <Label w={73.500}>3/4/2025</Label>
        </div>
      </div>
    </div>
  );
}

export default function App() {
  return (
    <div className="flex h-[1199px] w-[1919px] flex-col overflow-hidden bg-white font-['Open_Sans','Noto_Sans',sans-serif]">
      <TitleBar />
      <div className="h-[88px] shrink-0 border-b-2 border-[#999] bg-gradient-to-b from-[#ececec] to-[#d7d7d7]">
        <MenuRow />
        <MainToolbar />
      </div>
      <div className="flex h-[977px] shrink-0">
        <FlowNavigator />
        <SimulationPane />
      </div>
      <div className="flex h-[29px] shrink-0 justify-end bg-[#eeeeee] pt-[4px] pr-[17px]">
        <div className="h-[25px] w-[2px] bg-[#bdbdbd]" />
      </div>
      <Taskbar />
    </div>
  );
}
